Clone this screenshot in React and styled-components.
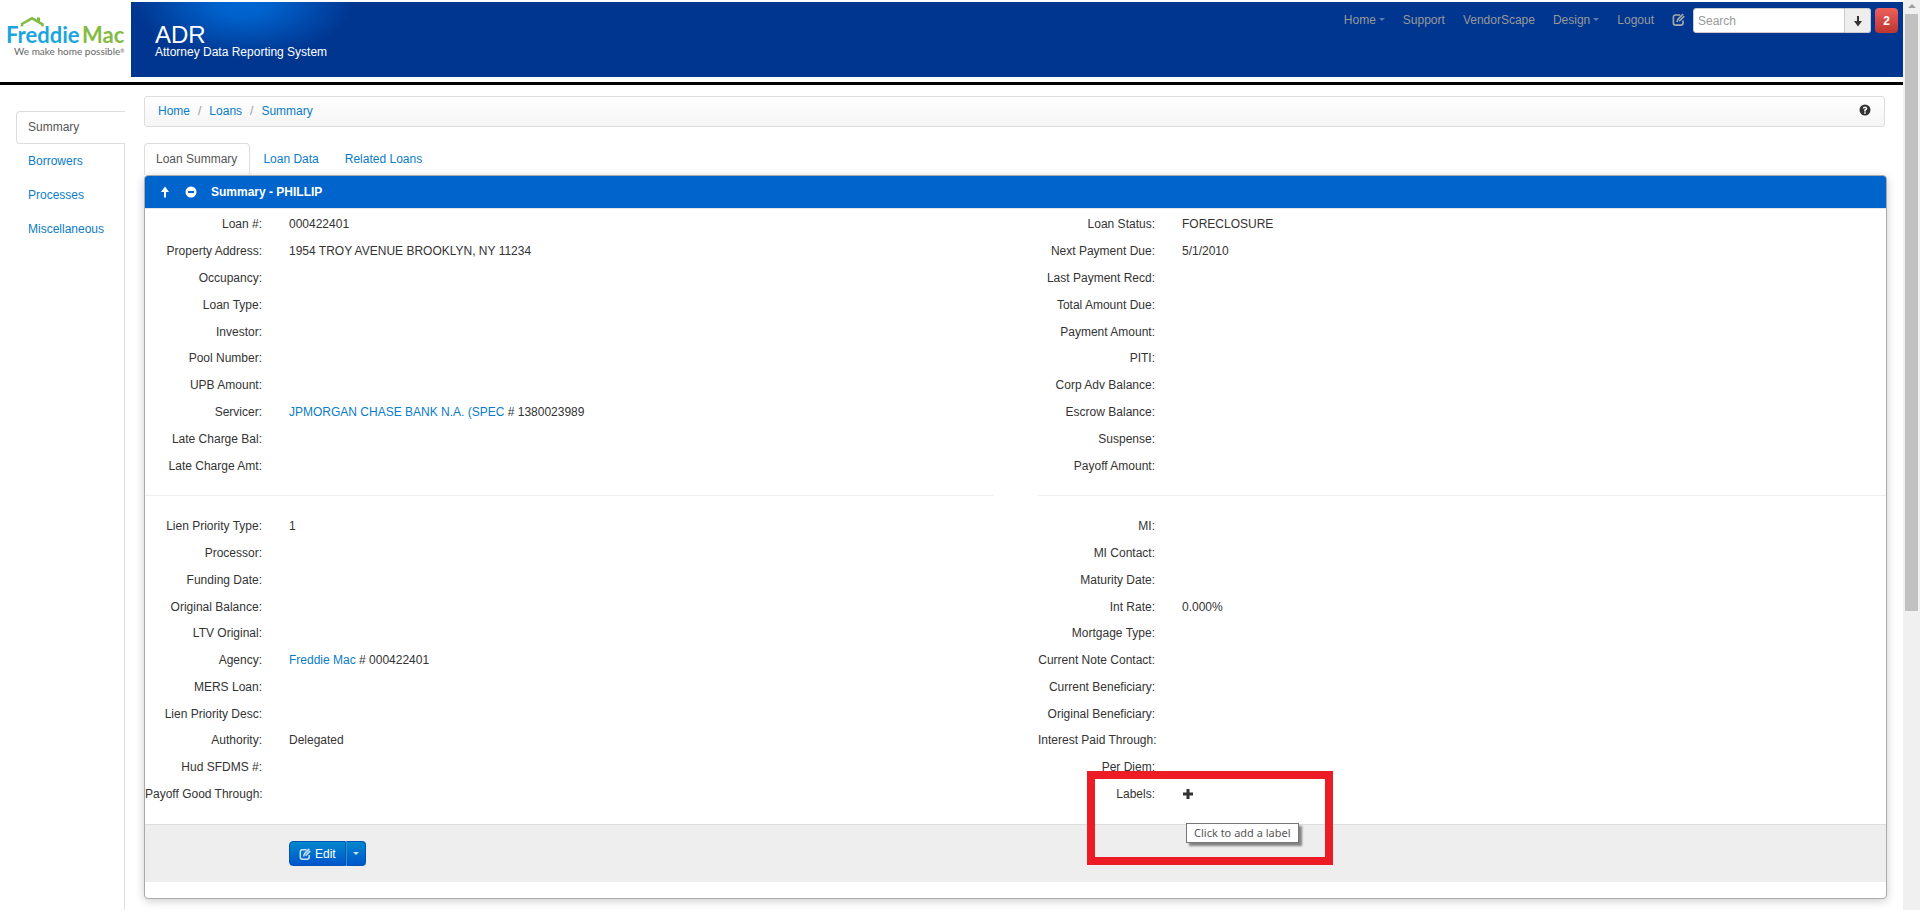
import React from 'react'
import styled, { createGlobalStyle } from 'styled-components'

const GlobalStyle = createGlobalStyle`
    * {
        box-sizing: border-box;
    }

    body {
        margin: 0;
        background: #fff;
        color: #333;
        font-family: "Liberation Sans", Arial, sans-serif;
        font-size: 12px;
        line-height: 20px;
    }

    a {
        color: #0a7cc8;
        text-decoration: none;
    }

    button, input {
        font-family: inherit;
        font-size: 12px;
    }
`

const Window = styled.div`
    display: flex;
    height: 100vh;
    overflow: hidden;
`

const Page = styled.div`
    flex: 1;
    min-width: 0;
    display: flex;
    flex-direction: column;
`

const ScrollTrack = styled.div`
    width: 17px;
    padding: 0 2px;
    display: flex;
    flex-direction: column;
    align-items: center;
    background: #f0f0f0;
`

const ScrollArrow = styled.div`
    margin: 4px 0 6px;
    border: 4px solid transparent;
    border-top: 0;
    border-bottom-color: #a0a0a0;
`

const ScrollThumb = styled.div`
    width: 13px;
    flex: 2;
    background: #c1c1c1;
`

const ScrollRest = styled.div`
    flex: 1;
`

/* header */

const Header = styled.header`
    display: flex;
    padding: 2px 0 5px;
    border-bottom: 3px solid #000;
`

const LogoLink = styled.a`
    width: 131px;
    height: 75px;
`

const Banner = styled.div`
    flex: 1;
    display: flex;
    justify-content: space-between;
    align-items: flex-start;
    padding: 6px 5px 0 24px;
    color: #fff;
    background: radial-gradient(ellipse 110px 56px at 112px 0, #0066d3 0%, #0062cc 25%, #003690 100%) #003690;
`

const Title = styled.h1`
    margin: 17px 0 0;
    font-size: 24px;
    font-weight: normal;
    line-height: 20px;
`

const SubTitle = styled.p`
    margin: 0;
    line-height: 14px;
`

const Nav = styled.nav`
    display: flex;
    align-items: center;
`

const NavLink = styled.a`
    display: flex;
    align-items: center;
    gap: 3px;
    margin-right: 18px;
    padding-bottom: 2px;
    color: #999;
`

const Caret = styled.span`
    border: 3px solid transparent;
    border-top-color: ${props => props.$color};
    border-bottom: 0;
`

const IconLink = styled.a`
    display: flex;
    margin-right: 8px;
    padding-bottom: 2px;
    color: #aaa;
`

const SearchInput = styled.input`
    width: 152px;
    height: 25px;
    padding: 0 4px;
    border: 1px solid #ccc;
    border-radius: 3px 0 0 3px;
    background: #fff;

    &::placeholder {
        color: #999;
        opacity: 1;
    }
`

const SearchButton = styled.button`
    width: 26px;
    height: 25px;
    margin-right: 4px;
    padding: 0;
    display: flex;
    align-items: center;
    justify-content: center;
    border: 1px solid #ccc;
    border-left: 0;
    border-radius: 0 3px 3px 0;
    background: #eee;
    color: #333;
`

const AlertButton = styled.button`
    width: 23px;
    height: 25px;
    padding: 0;
    border: 0;
    border-radius: 4px;
    background: linear-gradient(#ee5f5b, #bd362f);
    color: #fff;
    font-weight: bold;
`

/* body */

const Body = styled.div`
    flex: 1;
    display: flex;
`

const SideNav = styled.nav`
    width: 125px;
    padding: 26px 0 0 16px;
    display: flex;
    flex-direction: column;
`

const SideLink = styled.a`
    height: ${props => (props.$active ? 33 : 34)}px;
    padding: ${props => (props.$active ? '5px 11px' : '7px 12px')};
    border: 1px solid #ddd;
    border-width: ${props => (props.$active ? '1px 0 1px 1px' : '0 1px 0 0')};
    border-radius: ${props => (props.$active ? '4px 0 0 4px' : '0')};
    color: ${props => (props.$active ? '#555' : '#0a7cc8')};
`

const SideFill = styled.div`
    flex: 1;
    border-right: 1px solid #ddd;
`

const Main = styled.main`
    flex: 1;
    min-width: 0;
    padding: 11px 16px 12px 19px;
`

const Breadcrumb = styled.div`
    display: flex;
    align-items: flex-start;
    height: 31px;
    margin: 0 2px 16px 0;
    padding: 4px 13px;
    border: 1px solid #ddd;
    border-radius: 3px;
    background: linear-gradient(#fff, #f5f5f5);
`

const Slash = styled.span`
    padding: 0 8px;
    color: #999;
`

const HelpLink = styled.a`
    display: flex;
    margin: 2px 0 0 auto;
    padding-top: 1px;
    color: #333;
`

const Tabs = styled.nav`
    display: flex;
    gap: 1px;
`

const Tab = styled.a`
    height: 32px;
    padding: 5px 12px 5px 11px;
    border: 1px solid ${props => (props.$active ? '#ddd' : 'transparent')};
    border-bottom: 0;
    border-radius: 4px 4px 0 0;
    color: ${props => (props.$active ? '#555' : '#0a7cc8')};
`

const Panel = styled.section`
    border: 1px solid #aaa;
    border-radius: 4px;
    background: #fff;
    box-shadow: 0 2px 10px rgba(0, 0, 0, 0.2);
`

const PanelHeader = styled.div`
    height: 33px;
    padding-left: 14px;
    display: flex;
    align-items: center;
    gap: 14px;
    border-bottom: 1px solid #e5e5e5;
    border-radius: 3px 3px 0 0;
    background: #0064cd;
    color: #fff;
`

const PanelTitle = styled.h2`
    margin: 0;
    font-size: 12px;
    line-height: 20px;
`

const PlainButton = styled.button`
    display: flex;
    padding: 0;
    border: 0;
    background: none;
    color: inherit;
`

const Columns = styled.div`
    display: grid;
    grid-template-columns: 1fr 1fr;
    column-gap: 45px;
`

const Fields = styled.dl`
    display: flex;
    flex-direction: column;
    margin: 0;
    padding: ${props => (props.$first ? '2px 0 16px' : '17px 0')};
    min-height: ${props => props.$height}px;
    border-bottom: ${props => (props.$first ? '1px solid #eee' : '0')};
`

const Field = styled.div`
    flex: 1;
    display: flex;
    align-items: center;
    gap: 27px;
`

const Label = styled.dt`
    flex: none;
    width: 117px;
    text-align: right;
    white-space: nowrap;
`

const Value = styled.dd`
    position: relative;
    margin: 0;
`

const Highlight = styled.div`
    position: absolute;
    top: -17px;
    left: -95px;
    width: 246px;
    height: 94px;
    border: 8px solid #ed1c24;
    pointer-events: none;
`

const Tooltip = styled.div`
    position: absolute;
    top: 35px;
    left: 4px;
    height: 20px;
    padding: 0 7px;
    border: 1px solid #767676;
    background: #fff;
    box-shadow: 3px 3px 2px rgba(0, 0, 0, 0.45);
    color: #575757;
    font-family: "Noto Sans", "Open Sans", sans-serif;
    font-size: 11px;
    line-height: 18px;
    white-space: nowrap;
`

const Actions = styled.div`
    display: flex;
    margin-bottom: 16px;
    padding: 16px 0 16px 144px;
    border-top: 1px solid #ddd;
    background: #eee;
`

const ActionButton = styled.button`
    height: 25px;
    padding: 0 ${props => (props.$split ? 6 : 9)}px;
    display: flex;
    align-items: center;
    gap: 4px;
    border: 1px solid #0055b3;
    border-left-color: ${props => (props.$split ? '#2f8fd6' : '#0055b3')};
    border-radius: ${props => (props.$split ? '0 4px 4px 0' : '4px 0 0 4px')};
    background: linear-gradient(#0088cc, #0055cc);
    color: #fff;

    svg {
        color: #cce2f5;
    }
`

const icons = {
    edit: 'M7.500 1.800H3.500Q1.300 1.800 1.300 4v5q0 2.200 2.200 2.200h4.500q2.200 0 2.200-2.200V7M4.600 8.400l.9-2.800L10.200 .9M6.600 7.600l4.700-4.700',
    down: 'M5 1h2v5h3L6 11.500 2 6h3z',
    up: 'M5 11.500h2V6h3L6 .5 2 6h3z',
    plus: 'M4.500 1h3v3.500H11v3H7.500V11h-3V7.500H1v-3h3.500z',
    minus: 'M6 .5a5.500 5.500 0 1 0 0 11 5.500 5.500 0 0 0 0-11zM3 5h6v2H3z',
    help: 'M6 .5a5.500 5.500 0 1 0 0 11 5.500 5.500 0 0 0 0-11zM5.200 8.200h1.600v1.500H5.200zM3.700 4.600Q3.900 2.400 6 2.400T8.300 4.400Q8.300 5.500 6.900 6.300V7.400H5.200V5.600Q6.600 5 6.600 4.400 6.500 3.800 6 3.800T5.300 4.600z',
}

function Icon({ name, size = 12 }) {
    const line = name === 'edit'
    return (
        <svg width={size} height={size} viewBox="0 0 12 12" aria-hidden="true">
            <path
                d={icons[name]}
                fill={line ? 'none' : 'currentColor'}
                fillRule="evenodd"
                stroke={line ? 'currentColor' : 'none'}
                strokeWidth="1.500"
            />
        </svg>
    )
}

function Logo() {
    return (
        <svg width="131" height="75" viewBox="0 2 131 75" role="img" aria-label="Freddie Mac">
            <path d="M22 26.500v-2.500L32 18.300l10.500 6v2.200" fill="none" stroke="#82bc42" strokeWidth="2.500" />
            <path d="M37 17.500h3v5l-3-2z" fill="#82bc42" />
            <text x="6" y="43" fontFamily="Lato" fontWeight="bold" fontSize="22" fill="#1ba5e0">Freddie</text>
            <text x="82" y="43" fontFamily="Lato" fontWeight="bold" fontSize="22" fill="#82bc42">Mac</text>
            <text x="14" y="55" fontFamily="Lato" fontSize="10" fill="#666">
                We make home possible<tspan fontSize="5" dy="-2">®</tspan>
            </text>
        </svg>
    )
}

const groups = [
    {
        height: 287,
        left: [
            ['Loan #', '000422401'],
            ['Property Address', '1954 TROY AVENUE BROOKLYN, NY 11234'],
            ['Occupancy'],
            ['Loan Type'],
            ['Investor'],
            ['Pool Number'],
            ['UPB Amount'],
            ['Servicer', '# 1380023989', 'JPMORGAN CHASE BANK N.A. (SPEC'],
            ['Late Charge Bal'],
            ['Late Charge Amt'],
        ],
        right: [
            ['Loan Status', 'FORECLOSURE'],
            ['Next Payment Due', '5/1/2010'],
            ['Last Payment Recd'],
            ['Total Amount Due'],
            ['Payment Amount'],
            ['PITI'],
            ['Corp Adv Balance'],
            ['Escrow Balance'],
            ['Suspense'],
            ['Payoff Amount'],
        ],
    },
    {
        height: 328,
        left: [
            ['Lien Priority Type', '1'],
            ['Processor'],
            ['Funding Date'],
            ['Original Balance'],
            ['LTV Original'],
            ['Agency', '# 000422401', 'Freddie Mac'],
            ['MERS Loan'],
            ['Lien Priority Desc'],
            ['Authority', 'Delegated'],
            ['Hud SFDMS #'],
            ['Payoff Good Through'],
        ],
        right: [
            ['MI'],
            ['MI Contact'],
            ['Maturity Date'],
            ['Int Rate', '0.000%'],
            ['Mortgage Type'],
            ['Current Note Contact'],
            ['Current Beneficiary'],
            ['Original Beneficiary'],
            ['Interest Paid Through'],
            ['Per Diem'],
            ['Labels'],
        ],
    },
]

function AddLabel() {
    return (
        <>
            <PlainButton aria-label="Add label"><Icon name="plus" /></PlainButton>
            <Tooltip role="tooltip">Click to add a label</Tooltip>
            <Highlight />
        </>
    )
}

function FieldList({ rows, height, first }) {
    return (
        <Fields $height={height} $first={first}>
            {rows.map(([label, value, link]) => (
                <Field key={label}>
                    <Label>{label}:</Label>
                    <Value>
                        {link && <a href="#">{link}</a>} {value}
                        {label === 'Labels' && <AddLabel />}
                    </Value>
                </Field>
            ))}
        </Fields>
    )
}

function App() {
    return (
        <Window>
            <GlobalStyle />
            <Page>
                <Header>
                    <LogoLink href="#"><Logo /></LogoLink>
                    <Banner>
                        <div>
                            <Title>ADR</Title>
                            <SubTitle>Attorney Data Reporting System</SubTitle>
                        </div>
                        <Nav>
                            <NavLink href="#">Home <Caret $color="#5f7cab" /></NavLink>
                            <NavLink href="#">Support</NavLink>
                            <NavLink href="#">VendorScape</NavLink>
                            <NavLink href="#">Design <Caret $color="#5f7cab" /></NavLink>
                            <NavLink href="#">Logout</NavLink>
                            <IconLink href="#" aria-label="Compose"><Icon name="edit" size={13} /></IconLink>
                            <SearchInput type="text" placeholder="Search" aria-label="Search" />
                            <SearchButton aria-label="Go"><Icon name="down" /></SearchButton>
                            <AlertButton>2</AlertButton>
                        </Nav>
                    </Banner>
                </Header>

                <Body>
                    <SideNav>
                        <SideLink href="#" $active>Summary</SideLink>
                        <SideLink href="#">Borrowers</SideLink>
                        <SideLink href="#">Processes</SideLink>
                        <SideLink href="#">Miscellaneous</SideLink>
                        <SideFill />
                    </SideNav>

                    <Main>
                        <Breadcrumb>
                            <a href="#">Home</a>
                            <Slash>/</Slash>
                            <a href="#">Loans</a>
                            <Slash>/</Slash>
                            <a href="#">Summary</a>
                            <HelpLink href="#" aria-label="Help"><Icon name="help" /></HelpLink>
                        </Breadcrumb>

                        <Tabs>
                            <Tab href="#" $active>Loan Summary</Tab>
                            <Tab href="#">Loan Data</Tab>
                            <Tab href="#">Related Loans</Tab>
                        </Tabs>

                        <Panel>
                            <PanelHeader>
                                <PlainButton aria-label="Move up"><Icon name="up" /></PlainButton>
                                <PlainButton aria-label="Collapse"><Icon name="minus" /></PlainButton>
                                <PanelTitle>Summary - PHILLIP</PanelTitle>
                            </PanelHeader>
                            {groups.map((group, i) => (
                                <Columns key={group.height}>
                                    <FieldList rows={group.left} height={group.height} first={i === 0} />
                                    <FieldList rows={group.right} height={group.height} first={i === 0} />
                                </Columns>
                            ))}
                            <Actions>
                                <ActionButton><Icon name="edit" /> Edit</ActionButton>
                                <ActionButton $split aria-label="More actions"><Caret $color="#cce2f5" /></ActionButton>
                            </Actions>
                        </Panel>
                    </Main>
                </Body>
            </Page>
            <ScrollTrack>
                <ScrollArrow />
                <ScrollThumb />
                <ScrollRest />
            </ScrollTrack>
        </Window>
    )
}

export default App
